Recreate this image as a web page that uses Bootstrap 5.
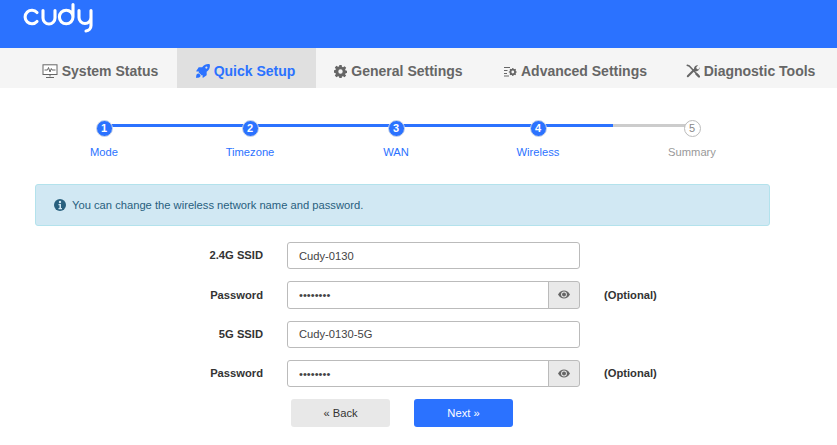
<!DOCTYPE html>
<html lang="en">
<head>
<meta charset="utf-8">
<title>Cudy Quick Setup</title>
<link href="https://cdn.jsdelivr.net/npm/bootstrap@5.3.0/dist/css/bootstrap.min.css" rel="stylesheet">
<style>
html,body{height:445px;overflow:hidden}
body{font-family:"Liberation Sans",Arial,sans-serif;font-size:11.2px;color:#333;background:#fff}
.top-band{height:48px;background:#2b72ff}
.logo-svg{display:block;margin-left:22px;width:72px;height:36px}
.main-tabs{height:40px;background:#f5f5f5;padding-left:25px}
.main-tabs .nav-link{height:40px;display:flex;align-items:center;gap:4px;padding:6px 0 0;font-size:14px;font-weight:700;color:#666;justify-content:center}
.main-tabs .nav-link.active{background:#e0e0e0;color:#2b72ff}
.tab-a{width:152px}.tab-b{width:139px}.tab-c{width:165px}.tab-d{width:187px}.tab-e{width:165px}
.main-tabs .tab-a,.main-tabs .tab-b{padding-right:2px}
.main-tabs .tab-d{padding-left:2px}
.main-tabs svg{flex:none}
.stepper{padding:32px 0 0 31px;height:96px}
.step-cell{position:relative;text-align:center;color:#2b72ff;font-size:11.2px;line-height:13px}
.step-cell.w1{width:146px}.step-cell.w4{width:138px}.step-cell.w5{width:170px;color:#999}
.step-cell::after{content:"";position:absolute;top:4px;left:50%;height:3px;background:#2b72ff;z-index:0}
.step-cell.w1::after{width:146px}
.step-cell.w3::after{width:142px}
.step-cell.w4::after{width:75px}
.step-cell.w5::after{display:none}
.step-cell.w4::before{content:"";position:absolute;top:4px;left:144px;width:79px;height:3px;background:#ccc}
.step-dot{position:relative;z-index:1;display:block;width:17px;height:17px;margin:0 auto 9px;border-radius:50%;background:#2b72ff;border:1px solid #cfd8e8;color:#fff;font-size:11px;font-weight:700;line-height:15px}
.w5 .step-dot{background:#fff;border-color:#bbb;color:#888;font-weight:400}
.note-box{width:735px;height:42px;margin:0 0 16px 35px;padding:0 0 0 18px;display:flex;align-items:center;gap:6px;background:#d1e8f3;border:1px solid #b3e2ec;border-radius:3px;color:#28607e;font-size:11.2px}
.form-line{display:flex;align-items:center;height:27.3px;margin-bottom:12px}
.line-label{width:263px;text-align:right;font-weight:700;margin:0 24px 0 0;color:#333}
.field-wrap{width:293px}
.field-wrap .form-control{height:27.3px;min-height:0;padding:0 11px;font-size:11.2px;color:#444;border:1px solid #bbb;border-radius:3px;box-shadow:none}
.field-wrap .input-group-text{width:32px;padding:0;justify-content:center;background:#e9e9e9;border:1px solid #bbb;border-radius:0 3px 3px 0}
.opt-note{margin-left:24px;font-weight:700}
.act-row{display:flex;padding-left:291px;gap:24px}
.act-row .btn{width:99px;height:28px;padding:0;font-size:11.2px;border:0;border-radius:3px;line-height:28px}
.act-back{background:#e8e8e8;color:#333}
.act-next{background:#2b72ff;color:#fff}
</style>
</head>
<body>
<header class="top-band">
<svg class="logo-svg" viewBox="0 0 72 36" fill="none" stroke="#fff" stroke-width="3.100" stroke-linecap="round" stroke-linejoin="round" aria-label="cudy">
<path d="M15 12.500A6.800 6.800 0 1 0 15 21.500"/>
<path d="M21 10.500V18a6 6 0 0 0 12 0V10.500"/>
<path d="M51 4.500V17M51 17a6.800 6.800 0 1 1-13.600 0a6.800 6.800 0 1 1 13.600 0Z"/>
<path d="M57 10.500V17.500a6 6 0 0 0 12 0V10.500M69 17V25.500a5.500 5.500 0 0 1-5 5.500"/>
</svg>
</header>
<nav class="nav main-tabs">
<a class="nav-link tab-a" href="#"><svg width="16" height="15" viewBox="0 0 16 15" fill="none" stroke="#666" stroke-width="1"><rect x="1" y=".8" width="14" height="9.700" fill="#fff"/><path d="M2.500 6h3l1-2.500 1.500 4.500 1.300-3.500.7 1.500h3.500M8 10.500v2M4 13.500h8" /></svg>System Status</a>
<a class="nav-link tab-b active" href="#"><svg width="14" height="14" viewBox="0 0 512 512" fill="#2b72ff"><path d="M505 19c-2-7-5-10-12-12C440-5 380 4 330 30c-40 21-75 52-105 92H110c-9 0-18 5-22 13L9 252c-5 8 1 20 11 20h92l-20 28 120 120 28-20v92c0 10 12 16 20 11l117-79c8-4 13-13 13-22V287c40-30 71-65 92-105 26-50 35-110 23-163zM380 172a40 40 0 1 1 0-80 40 40 0 0 1 0 80zM35 370c-28 28-32 107-32 139 32 0 111-4 139-32 30-30 30-62 10-82l-35-35c-20-20-52-20-82 10z"/></svg>Quick Setup</a>
<a class="nav-link tab-c" href="#"><svg width="13" height="13" viewBox="0 0 16 16" fill="#666"><path fill-rule="evenodd" d="M6.600 0h2.800l.4 2.200 1.300.6L13 1.500 15 3.500l-1.300 1.900.5 1.300 2.200.4v2.800l-2.200.4-.5 1.300L15 13l-2 2-1.900-1.300-1.300.5-.4 2.200H6.600l-.4-2.200-1.300-.5L3 15l-2-2 1.300-1.900-.5-1.300L0 9.400V6.600l1.800-.4.500-1.300L1 3l2-2 1.900 1.300 1.300-.6zM8 5.300a2.700 2.700 0 1 0 0 5.400 2.700 2.700 0 0 0 0-5.400z"/></svg>General Settings</a>
<a class="nav-link tab-d" href="#"><svg width="13" height="11" viewBox="0 0 13 11" fill="none" stroke="#666" stroke-width="1"><path d="M0 1.500h6M0 4.500h3.500M0 7.500h3M0 10h5"/><circle cx="8.800" cy="6" r="2.300" stroke-width="1.800"/><path d="M8.800 2v1.500M8.800 8.500V10M4.800 6h1.500M11.300 6h1.500M6 3.200l1 1M10.600 7.800l1 1M6 8.800l1-1M10.600 4.200l1-1" stroke-width="1.200"/></svg>Advanced Settings</a>
<a class="nav-link tab-e" href="#"><svg width="14" height="14" viewBox="0 0 14 14" fill="none" stroke="#666" stroke-linecap="round"><path d="M1.200 1.200l2 .8 8.800 9.300" stroke-width="1.500"/><path d="M10.500 10l2.500 2.500" stroke-width="2.400"/><path d="M1.800 12.300L8.300 5.800" stroke-width="2"/><path d="M8 5.500C7.600 3 9.700.7 12.200 1.200L10.200 3.200l.6 1.700 1.700.6 1.100-2.300c.5 2.500-2 4.700-4.500 4.100z" fill="#666" stroke="none"/></svg>Diagnostic Tools</a>
</nav>
<section class="stepper d-flex">
<div class="step-cell w1"><span class="step-dot">1</span>Mode</div>
<div class="step-cell w1"><span class="step-dot">2</span>Timezone</div>
<div class="step-cell w1 w3"><span class="step-dot">3</span>WAN</div>
<div class="step-cell w4"><span class="step-dot">4</span>Wireless</div>
<div class="step-cell w5"><span class="step-dot">5</span>Summary</div>
</section>
<div class="alert alert-info note-box" role="alert"><svg width="12" height="12" viewBox="0 0 12 12"><circle cx="6" cy="6" r="6" fill="#28607e"/><circle cx="6" cy="3" r="1.200" fill="#d1e8f3"/><path d="M4.500 5h2.500v4h1v1.200H4.500V9h1V6.200h-1z" fill="#d1e8f3"/></svg>You can change the wireless network name and password.</div>
<form>
<div class="form-line"><label class="line-label" for="s1">2.4G SSID</label><div class="field-wrap"><input id="s1" class="form-control" type="text" value="Cudy-0130"></div></div>
<div class="form-line"><label class="line-label" for="p1">Password</label><div class="field-wrap input-group"><input id="p1" class="form-control" type="password" value="12345678"><span class="input-group-text"><svg width="12" height="9" viewBox="0 0 12 9"><path d="M0 4.500C1.500 1.800 3.500.5 6 .5s4.500 1.300 6 4c-1.500 2.700-3.500 4-6 4s-4.500-1.300-6-4z" fill="#666"/><circle cx="6" cy="4.500" r="2.900" fill="#e9e9e9"/><circle cx="6" cy="4.500" r="2" fill="#666"/></svg></span></div><span class="opt-note">(Optional)</span></div>
<div class="form-line"><label class="line-label" for="s2">5G SSID</label><div class="field-wrap"><input id="s2" class="form-control" type="text" value="Cudy-0130-5G"></div></div>
<div class="form-line"><label class="line-label" for="p2">Password</label><div class="field-wrap input-group"><input id="p2" class="form-control" type="password" value="12345678"><span class="input-group-text"><svg width="12" height="9" viewBox="0 0 12 9"><path d="M0 4.500C1.500 1.800 3.500.5 6 .5s4.500 1.300 6 4c-1.500 2.700-3.500 4-6 4s-4.500-1.300-6-4z" fill="#666"/><circle cx="6" cy="4.500" r="2.900" fill="#e9e9e9"/><circle cx="6" cy="4.500" r="2" fill="#666"/></svg></span></div><span class="opt-note">(Optional)</span></div>
<div class="act-row"><button type="button" class="btn act-back">« Back</button><button type="button" class="btn act-next">Next »</button></div>
</form>
<script src="https://cdn.jsdelivr.net/npm/bootstrap@5.3.0/dist/js/bootstrap.bundle.min.js"></script>
</body>
</html>
